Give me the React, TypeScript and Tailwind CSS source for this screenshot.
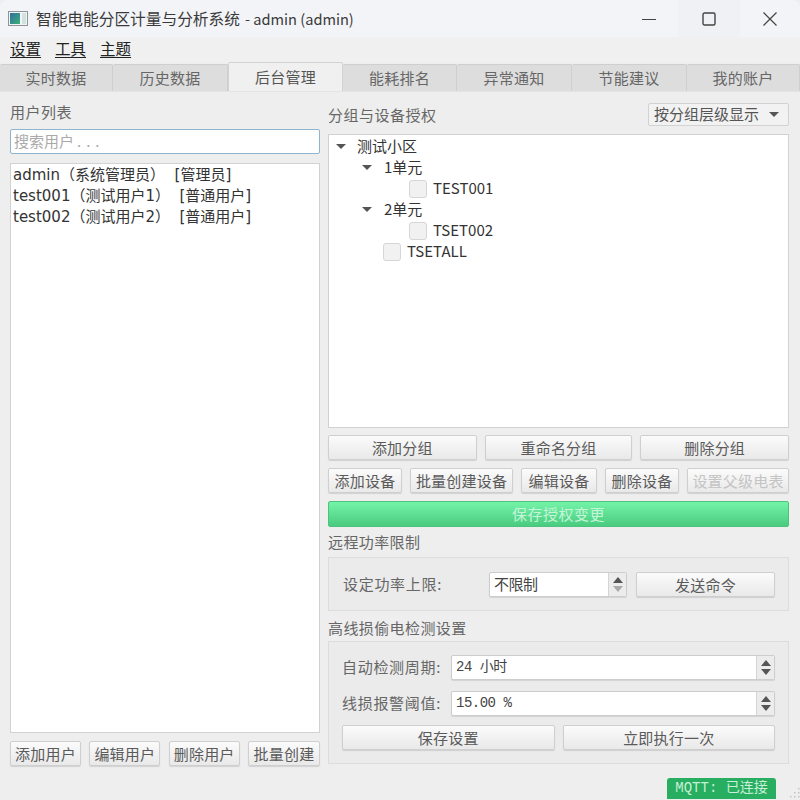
import React from "react";

const cjk = "font-['Noto_Sans_CJK_SC','Noto_Sans',sans-serif]";
const mono = "font-['Liberation_Mono','Noto_Sans_CJK_SC',monospace]";
const listFont = "font-['DejaVu_Sans','Noto_Sans_CJK_SC',sans-serif]";

const tabs = [
	{ label: "实时数据", width: "w-[113px]" },
	{ label: "历史数据", width: "w-[115px]" },
	{ label: "后台管理", width: "w-[115px]", active: true },
	{ label: "能耗排名", width: "w-[114px]" },
	{ label: "异常通知", width: "w-[115px]" },
	{ label: "节能建议", width: "w-[115px]" },
	{ label: "我的账户", width: "w-[113px]" },
];

const Btn = ({ children, className = "", disabled = false }: { children: React.ReactNode; className?: string; disabled?: boolean }) => (
	<button
		className={`flex h-[25px] items-center justify-center whitespace-nowrap rounded-[2px] border border-[#cfcfcf] bg-gradient-to-b from-[#fbfbfb] to-[#e9e9e9] text-[15px] leading-none tracking-[0.2px] shadow-[0_1px_1px_rgba(0,0,0,0.12)] ${disabled ? "text-[#c4c4c4]" : "text-[#5a5a5a]"} ${className}`}
	>
		{children}
	</button>
);

const Caret = () => (
	<svg width="10" height="5" viewBox="0 0 10 5" className="shrink-0">
		<path d="M0 0h10L5 5z" fill="#555" />
	</svg>
);

const SpinArrows = ({ light = false }: { light?: boolean }) => (
	<div className="flex h-full w-[18px] flex-col items-center justify-center gap-[3px] border-l border-[#d4d4d4] bg-[#ececec]">
		<svg width="10" height="6" viewBox="0 0 10 6">
			<path d="M5 0l5 6H0z" fill="#555" />
		</svg>
		<svg width="10" height="6" viewBox="0 0 10 6">
			<path d="M0 0h10L5 6z" fill={light ? "#aaa" : "#555"} />
		</svg>
	</div>
);

const SpinBox = ({ value, className = "", light = false, fontClass = mono }: { value: string; className?: string; light?: boolean; fontClass?: string }) => (
	<div className={`flex h-[25px] items-center overflow-hidden rounded-[2px] border border-[#cdcdcd] bg-white shadow-[0_1px_1px_rgba(0,0,0,0.1)] ${className}`}>
		<span className={`flex-1 whitespace-pre pl-[4px] tracking-[-0.5px] text-[14px] text-[#444] ${fontClass}`}>{value}</span>
		<SpinArrows light={light} />
	</div>
);

const Check = ({ label }: { label: string }) => (
	<div className="flex items-center gap-[6px]">
		<span className="h-[18px] w-[18px] rounded-[3px] border border-[#d6d6d6] bg-[#f1f1f1]" />
		<span className="text-[15px] text-[#333]">{label}</span>
	</div>
);

const GroupRow = ({ label, className }: { label: string; className: string }) => (
	<div className={`flex h-[21px] items-center ${className}`}>
		<Caret />
		<span className="text-[15px] text-[#333]">{label}</span>
	</div>
);

const App = () => {
	return (
		<div className={`relative flex h-[800px] w-[800px] flex-col overflow-hidden bg-[#eeeeee] ${cjk}`}>
			{/* Title bar */}
			<div className="flex h-[37px] shrink-0 items-center rounded-t-[8px] bg-[#f3f4f8] pl-[8px]">
				<svg width="20" height="15" viewBox="0 0 20 15" className="shrink-0">
					<defs>
						<linearGradient id="appIcon" x1="0" y1="0" x2="1" y2="1">
							<stop offset="0" stopColor="#2f6f9f" />
							<stop offset="1" stopColor="#3fae78" />
						</linearGradient>
					</defs>
					<rect x="0.5" y="0.5" width="19" height="14" fill="#f2f5f5" stroke="#8e9496" />
					<rect x="2" y="2" width="10" height="11" fill="url(#appIcon)" />
					<rect x="14" y="2" width="4" height="11" fill="#cfe3dc" />
				</svg>
				<span className="ml-[8px] text-[15.7px] text-[#3a3a3a]">智能电能分区计量与分析系统</span>
				<span className="ml-[5px] flex-1 whitespace-pre text-[14.6px] text-[#3a3a3a]">- admin (admin)</span>
				<div className="flex h-full w-[58px] items-center justify-center">
					<svg width="14" height="14" viewBox="0 0 14 14">
						<path d="M0 7.5h14" stroke="#444" strokeWidth="1" />
					</svg>
				</div>
				<div className="flex h-full w-[62px] items-center justify-center bg-[#f0f1f5]">
					<svg width="14" height="14" viewBox="0 0 14 14">
						<rect x="1" y="1" width="12" height="12" rx="1.5" fill="none" stroke="#444" strokeWidth="1.4" />
					</svg>
				</div>
				<div className="flex h-full w-[60px] items-center justify-center">
					<svg width="14" height="14" viewBox="0 0 14 14">
						<path d="M0.5 0.5l13 13M13.5 0.5l-13 13" stroke="#444" strokeWidth="1.2" />
					</svg>
				</div>
			</div>

			{/* Menu */}
			<div className="flex h-[26px] shrink-0 items-center gap-[14px] bg-[#f0f0f0] pb-[2px] pl-[10px] text-[15.5px] text-[#222]">
				<span className="underline decoration-1 underline-offset-2">设置</span>
				<span className="underline decoration-1 underline-offset-2">工具</span>
				<span className="underline decoration-1 underline-offset-2">主题</span>
			</div>

			{/* Tabs */}
			<div className="flex h-[29px] shrink-0 items-end border-b border-[#e4e4e4]">
				{tabs.map((tab) => (
					<div
						key={tab.label}
						className={`flex items-center justify-center text-[15px] tracking-[0.2px] ${tab.width} ${
							tab.active
								? "h-[29px] rounded-t-[2px] border-x border-t border-[#d2d2d2] bg-[#f0f0f0] text-[#555]"
								: "h-[27px] rounded-t-[2px] border-r border-t border-[#cfcfcf] bg-[#dddddd] text-[#666]"
						}`}
					>
						{tab.label}
					</div>
				))}
			</div>

			{/* Content */}
			<div className="flex min-h-0 flex-1 gap-[8px] pl-[10px] pr-[11px] pt-[11px]">
				{/* Users */}
				<div className="flex w-[310px] shrink-0 flex-col">
					<div className="-mt-[2px] h-[28px] text-[15px] leading-[21px] tracking-[0.5px] text-[#666]">用户列表</div>
					<div className="flex h-[25px] items-center rounded-[2px] border border-[#8fb4cf] bg-white pl-[3px] text-[15px] text-[#aaa]">
						搜索用户<span className="ml-[3px] tracking-[5px]">...</span>
					</div>
					<div className={`mt-[9px] h-[570px] border border-[#d2d2d2] bg-white px-[2px] pt-px text-[15px] leading-[21px] text-[#333] ${listFont}`}>
						<div className="whitespace-pre">admin（系统管理员）  [管理员]</div>
						<div className="whitespace-pre">test001（测试用户1）  [普通用户]</div>
						<div className="whitespace-pre">test002（测试用户2）  [普通用户]</div>
					</div>
					<div className="mt-[8px] flex justify-between">
						<Btn className="w-[71px]">添加用户</Btn>
						<Btn className="w-[71px]">编辑用户</Btn>
						<Btn className="w-[71px]">删除用户</Btn>
						<Btn className="w-[72px]">批量创建</Btn>
					</div>
				</div>

				{/* Devices */}
				<div className="flex w-[461px] shrink-0 flex-col">
					<div className="flex h-[23px] items-center justify-between">
						<span className="pt-[2px] text-[15px] tracking-[0.5px] text-[#666]">分组与设备授权</span>
						<div className="flex h-[23px] w-[141px] items-center justify-between rounded-[2px] border border-[#d2d2d2] bg-[#f2f2f2] pl-[5px] pr-[9px] text-[15px] text-[#555]">
							按分组层级显示
							<Caret />
						</div>
					</div>

					{/* Tree */}
					<div className="mt-[8px] h-[294px] border border-[#d2d2d2] bg-white pt-px">
						<GroupRow label="测试小区" className="gap-[11px] pl-[7px]" />
						<GroupRow label="1单元" className="gap-[12px] pl-[33px]" />
						<div className="flex h-[21px] items-center pl-[80px]">
							<Check label="TEST001" />
						</div>
						<GroupRow label="2单元" className="gap-[12px] pl-[33px]" />
						<div className="flex h-[21px] items-center pl-[80px]">
							<Check label="TSET002" />
						</div>
						<div className="flex h-[21px] items-center pl-[54px]">
							<Check label="TSETALL" />
						</div>
					</div>

					<div className="mt-[7px] flex gap-[8px]">
						<Btn className="w-[149px]">添加分组</Btn>
						<Btn className="w-[148px]">重命名分组</Btn>
						<Btn className="w-[149px]">删除分组</Btn>
					</div>
					<div className="mt-[8px] flex gap-[8px]">
						<Btn className="w-[74px]">添加设备</Btn>
						<Btn className="w-[103px]">批量创建设备</Btn>
						<Btn className="w-[76px]">编辑设备</Btn>
						<Btn className="w-[74px]">删除设备</Btn>
						<Btn className="w-[102px]" disabled>设置父级电表</Btn>
					</div>
					<div className="mt-[8px] flex h-[26px] items-center justify-center rounded-[2px] border border-[#4cc27d] bg-gradient-to-b from-[#74f4a8] to-[#49cb80] text-[15px] tracking-[0.5px] text-[#c5f5d8]">保存授权变更</div>

					<div className="my-[3px] flex h-[24px] items-center text-[15px] tracking-[0.4px] text-[#666]">远程功率限制</div>
					<div className="flex h-[54px] items-center border border-[#dcdcdc] bg-[#ebebeb] pl-[14px]">
						<span className="w-[146px] text-[15px] tracking-[0.7px] text-[#666]">设定功率上限:</span>
						<SpinBox value="不限制" className="w-[138px]" light fontClass="text-[15px]" />
						<Btn className="ml-[9px] w-[139px]">发送命令</Btn>
					</div>

					<div className="mb-px mt-[5px] flex h-[24px] items-center text-[15px] tracking-[0.4px] text-[#666]">高线损偷电检测设置</div>
					<div className="flex h-[123px] flex-col border border-[#dcdcdc] bg-[#ebebeb] px-[13px] pt-[13px]">
						<div className="flex items-center">
							<span className="w-[109px] text-[15px] tracking-[0.7px] text-[#666]">自动检测周期:</span>
							<SpinBox value="24 小时" className="flex-1" />
						</div>
						<div className="mt-[11px] flex items-center">
							<span className="w-[109px] text-[15px] tracking-[0.7px] text-[#666]">线损报警阈值:</span>
							<SpinBox value="15.00 %" className="flex-1" />
						</div>
						<div className="mt-[9px] flex gap-[8px]">
							<Btn className="flex-1">保存设置</Btn>
							<Btn className="flex-1">立即执行一次</Btn>
						</div>
					</div>

					<div className="mt-[14px] flex justify-end pr-[13px]">
						<span className={`flex h-[21px] w-[109px] items-center justify-center rounded-t-[3px] bg-[#27ae60] text-[14px] text-[#c9efd8] ${mono}`}>MQTT: 已连接</span>
					</div>
				</div>
			</div>

			{/* Size grip */}
			<svg width="14" height="14" viewBox="0 0 14 14" className="absolute bottom-0 right-0">
				<path d="M12 2h1.5v1.5H12zM8 6h1.5v1.5H8zM12 6h1.5v1.5H12zM4 10h1.5v1.5H4zM8 10h1.5v1.5H8zM12 10h1.5v1.5H12z" fill="#c4c4c4" />
			</svg>
		</div>
	);
};

export default App;
